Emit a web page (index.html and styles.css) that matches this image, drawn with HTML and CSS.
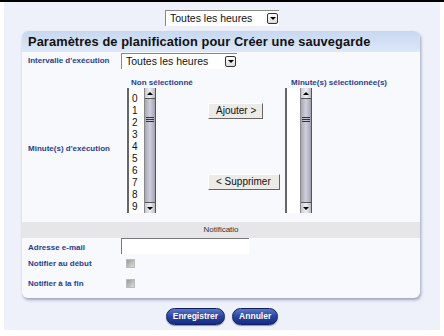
FILE: index.html
```html
<!DOCTYPE html>
<html>
<head>
<meta charset="utf-8">
<link rel="stylesheet" href="styles.css">
</head>
<body>
<div class="topline"></div>
<div class="page">
  <div class="topbar">
    <div class="select wide"><span class="sel-text">Toutes les heures</span><span class="sel-btn"><span class="tri"></span></span></div>
  </div>
  <div class="panel">
    <div class="panel-head">Paramètres de planification pour Créer une sauvegarde</div>
    <div class="panel-body">
      <div class="row r-interval">
        <div class="label">Intervalle d'exécution</div>
        <div class="select"><span class="sel-text">Toutes les heures</span><span class="sel-btn"><span class="tri"></span></span></div>
      </div>
      <div class="row r-minutes">
        <div class="label">Minute(s) d'exécution</div>
        <div class="lists">
          <div class="listcol">
            <div class="colhead">Non sélectionné</div>
            <div class="listbox">
              <div class="items">
                <div>0</div><div>1</div><div>2</div><div>3</div><div>4</div><div>5</div><div>6</div><div>7</div><div>8</div><div>9</div>
              </div>
              <div class="sbar"><div class="sb-up"><span class="tri up"></span></div><div class="sb-track"><div class="sb-thumb"><span></span><span></span><span></span></div></div><div class="sb-dn"><span class="tri"></span></div></div>
            </div>
          </div>
          <div class="btncol">
            <div class="gbtn">Ajouter &gt;</div>
            <div class="gbtn">&lt; Supprimer</div>
          </div>
          <div class="listcol right">
            <div class="colhead">Minute(s) sélectionnée(s)</div>
            <div class="listbox narrow">
              <div class="items"></div>
              <div class="sbar"><div class="sb-up"><span class="tri up"></span></div><div class="sb-track"><div class="sb-thumb"><span></span><span></span><span></span></div></div><div class="sb-dn"><span class="tri"></span></div></div>
            </div>
          </div>
        </div>
      </div>
      <div class="sect">Notificatio</div>
      <div class="row r-mail">
        <div class="label">Adresse e-mail</div>
        <div class="input"></div>
      </div>
      <div class="row r-chk">
        <div class="label">Notifier au début</div>
        <div class="chk"></div>
      </div>
      <div class="row r-chk last">
        <div class="label">Notifier à la fin</div>
        <div class="chk"></div>
      </div>
    </div>
  </div>
  <div class="actions">
    <div class="bbtn">Enregistrer</div>
    <div class="bbtn">Annuler</div>
  </div>
</div>
</body>
</html>
```
FILE: styles.css
```css
html, body { margin: 0; padding: 0; background: #ffffff; }
body { font-family: "Liberation Sans", Arial, sans-serif; width: 444px; height: 336px; overflow: hidden; }
.topline { height: 2px; background: #000; }
.page { margin: 0 4px; background: #eef0fa; height: 328px; }
.topbar { display: flex; justify-content: center; padding-top: 8px; height: 29px; box-sizing: border-box; }
.select { display: flex; align-items: center; height: 16px; width: 116px; background: #fff; border-top: 1px solid #888; border-left: 1px solid #888; box-sizing: border-box; font-size: 10.5px; color: #111; }
.select.wide { width: 114px; }
.sel-text { flex: 1; padding-left: 4px; line-height: 13px; white-space: nowrap; overflow: hidden; }
.sel-btn { width: 11px; height: 11px; margin-right: 1px; border: 1px solid #333; border-radius: 2px; background: linear-gradient(#fff, #ddd); display: flex; align-items: center; justify-content: center; box-sizing: border-box; }
.tri { width: 0; height: 0; border-left: 3px solid transparent; border-right: 3px solid transparent; border-top: 3px solid #000; }
.tri.up { border-top: 0; border-bottom: 3px solid #000; }
.panel { margin-left: 18px; width: 398px; border-radius: 6px; box-shadow: 1px 2px 3px rgba(90,100,130,0.55); background: #f8f9fd; overflow: hidden; }
.panel-head { height: 21px; line-height: 22px; padding-left: 6px; font-weight: bold; font-size: 12.8px; color: #111; background: linear-gradient(#c8d8f0, #dde8f8); letter-spacing: 0.1px; white-space: nowrap; }
.panel-body { padding-bottom: 4px; }
.row { display: flex; }
.label { width: 93px; padding-left: 6px; font-size: 8px; font-weight: bold; color: #2a3c8e; flex-shrink: 0; }
.r-interval { height: 18px; align-items: flex-start; }
.r-interval .select { margin-top: 1px; }
.r-interval .label { padding-top: 4px; }
.r-minutes { height: 152px; align-items: center; }
.r-minutes .label { padding-top: 4px; }
.lists { display: flex; height: 152px; margin-left: 6px; }
.listcol { display: flex; flex-direction: column; width: 75px; }
.listcol.right { width: 60px; }
.colhead { font-size: 8px; font-weight: bold; color: #2a3c8e; height: 10px; line-height: 10px; padding-left: 4px; margin-top: 8px; white-space: nowrap; }
.listcol.right .colhead { padding-left: 6px; }
.listbox { display: flex; width: 29px; height: 125px; background: #fff; border-left: 2px solid #666; box-sizing: border-box; }
.listbox.narrow { width: 27px; }
.items { flex: 1; padding-top: 5px; font-size: 10px; color: #111; padding-left: 3px; }
.items div { height: 12px; line-height: 12px; }
.sbar { width: 10px; display: flex; flex-direction: column; border-left: 1px solid #888; border-right: 1px solid #555; background: linear-gradient(90deg, #a7a7b7, #d0d0dc 50%, #a0a0b0); }
.sb-up, .sb-dn { height: 10px; display: flex; align-items: center; justify-content: center; background: linear-gradient(90deg, #c8c8d4, #eeeef4, #b8b8c4); border-bottom: 1px solid #555; }
.sb-dn { border-bottom: 0; border-top: 1px solid #555; }
.sb-track { flex: 1; display: flex; flex-direction: column; }
.sb-thumb { margin-top: 10px; height: 20px; display: flex; flex-direction: column; justify-content: center; gap: 1px; }
.sb-thumb span { display: block; height: 1px; background: #333; margin: 0 1px; }
.btncol { width: 77px; display: flex; flex-direction: column; align-items: flex-start; padding-left: 6px; }
.gbtn { font-size: 10px; color: #111; background: #ecebe8; border-right: 1px solid #666; border-bottom: 1px solid #666; border-top: 1px solid #fff; border-left: 1px solid #fff; height: 14px; line-height: 14px; padding: 0 6px 0 7px; white-space: nowrap; }
.gbtn:first-child { margin-top: 33px; }
.gbtn + .gbtn { margin-top: 55px; padding-right: 8px; }
.sect { background: #e6e6e8; height: 16px; line-height: 16px; font-size: 8px; color: #333; text-align: center; }
.r-mail { height: 17px; align-items: center; }
.input { width: 128px; height: 16px; border-top: 1px solid #777; border-left: 1px solid #777; background: #fff; box-sizing: border-box; align-self: flex-start; }
.r-chk { height: 17px; align-items: center; }
.r-chk.last { height: 22px; }
.r-mail .label { padding-top: 1px; }
.chk { width: 9px; height: 9px; margin-left: 5px; background: linear-gradient(135deg, #999, #ddd); border: 1px solid #bbb; box-sizing: border-box; }
.actions { display: flex; justify-content: center; gap: 7px; padding-top: 10px; }
.bbtn { height: 15px; line-height: 15px; padding: 0 6px; border-radius: 9px; background: linear-gradient(#5a79c6, #2a44a0 50%, #142c86); color: #fff; font-size: 8.5px; font-weight: bold; box-shadow: 0 1px 1px rgba(0,0,30,0.4); border: 1px solid #0e1f66; }
```
